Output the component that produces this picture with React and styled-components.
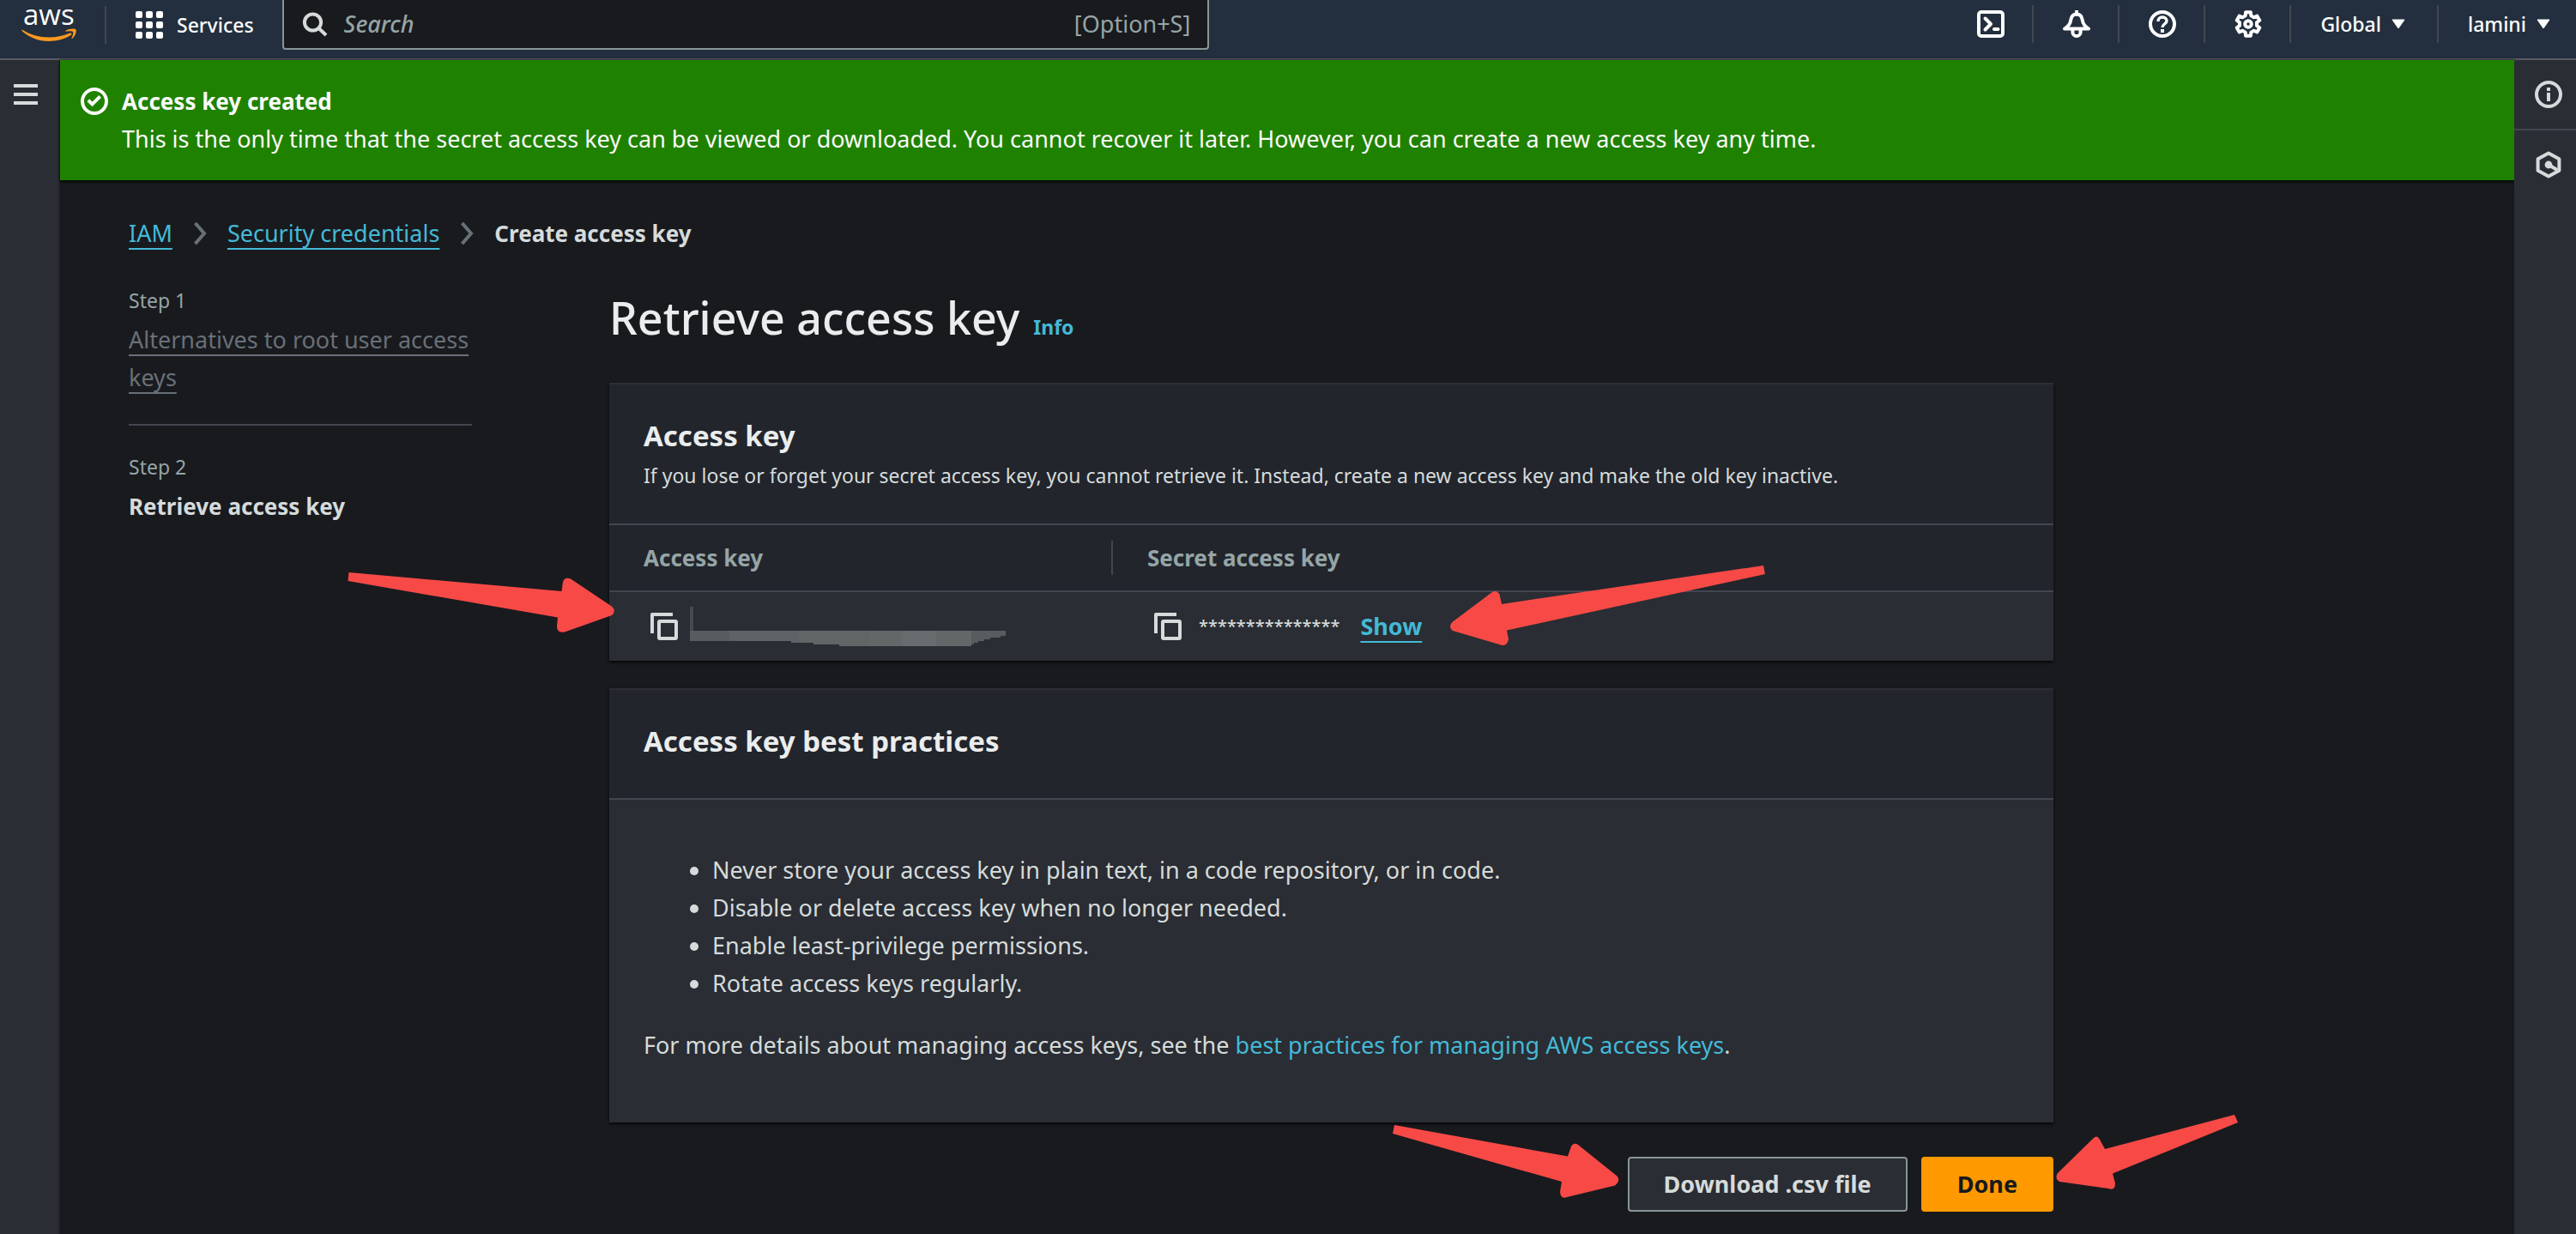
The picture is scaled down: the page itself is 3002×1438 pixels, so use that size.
import React from "react";
import styled, { createGlobalStyle, css } from "styled-components";

const color = {
  page: "#191a1e",
  rail: "#2a2d34",
  nav: "#232f3e",
  cardHeader: "#22252c",
  card: "#2a2d33",
  line: "#424650",
  navLine: "#414750",
  text: "#d5dbdb",
  heading: "#eaeded",
  muted: "#95a5a6",
  inactive: "#687078",
  border: "#879596",
  link: "#44b9d6",
  green: "#1f8100",
  orange: "#ff9900",
  red: "#f74a46",
};

const GlobalStyle = createGlobalStyle`
  *, *::before, *::after { box-sizing: border-box; }
  body {
    margin: 0;
    background: ${color.page};
    color: ${color.text};
    font-family: "Noto Sans", "Open Sans", sans-serif;
    font-size: 27px;
    font-weight: 400;
    line-height: 44px;
  }
  h1, h2, p, ul, ol { margin: 0; padding: 0; }
  button, input { font: inherit; color: inherit; }
`;

const bareButton = css`
  display: flex;
  align-items: center;
  border: 0;
  margin: 0;
  padding: 0;
  background: none;
  cursor: pointer;
`;

const underlined = css`
  text-decoration: underline;
  text-decoration-thickness: 2px;
  text-underline-offset: 7px;
  text-decoration-skip-ink: none;
`;

/* ---------- page frame ---------- */

const Page = styled.div`
  display: flex;
  flex-direction: column;
  min-height: 100vh;
  overflow: hidden;
`;

const TopNav = styled.header`
  display: flex;
  align-items: flex-start;
  justify-content: space-between;
  padding-bottom: 10px;
  background: ${color.nav};
  border-bottom: 2px solid #585b64;
`;

const NavGroup = styled.div`
  display: flex;
  flex: ${(p) => (p.$grow ? "1" : "none")};
  align-items: center;
  height: 58px;
  padding-bottom: ${(p) => (p.$grow ? "0" : "2px")};
`;

const Logo = styled.a`
  display: flex;
  margin-left: 22px;
  margin-right: 30px;
`;

const NavDivider = styled.span`
  width: 2px;
  height: 44px;
  background: ${color.navLine};
`;

const NavButton = styled.button`
  ${bareButton}
  gap: ${(p) => p.$gap || 16}px;
  height: 56px;
  padding: 0 ${(p) => p.$right}px 0 34px;
  color: #fff;
  font-size: 23px;
  font-weight: 500;
`;

const NavIconButton = styled.button`
  ${bareButton}
  height: 56px;
  padding: 0 32px 0 34px;
  color: #fff;
`;

const SearchBox = styled.label`
  display: flex;
  align-items: center;
  width: 36vw;
  height: 58px;
  padding: 0 20px 0 21px;
  background: ${color.page};
  border: 2px solid ${color.border};
  border-top: 0;
  border-radius: 0 0 4px 4px;
  color: ${color.muted};
`;

const SearchInput = styled.input`
  flex: 1;
  min-width: 0;
  margin-left: 17px;
  padding: 0;
  border: 0;
  outline: 0;
  background: none;
  &::placeholder {
    color: ${color.muted};
    font-style: italic;
    font-weight: 500;
    opacity: 1;
  }
`;

const Body = styled.div`
  display: flex;
  flex: 1;
`;

const LeftRail = styled.aside`
  width: 70px;
  padding: 28px 16px;
  background: ${color.rail};
`;

const RightRail = styled.aside`
  width: 72px;
  background: ${color.rail};
`;

const RailButton = styled.button`
  ${bareButton}
  color: ${color.text};
`;

const RailTab = styled(RailButton)`
  width: 100%;
  padding: 24px 16px 24px 24px;
  & + & { border-top: 2px solid ${color.line}; }
`;

const Content = styled.div`
  flex: 1;
  min-width: 0;
  box-shadow: 0 0 2px 1px rgba(0, 0, 0, 0.4);
`;

/* ---------- banner ---------- */

const Banner = styled.section`
  display: flex;
  align-items: flex-start;
  gap: 16px;
  padding: 26px 24px;
  background: ${color.green};
  color: #fafafa;
  box-shadow: 0 2px 3px rgba(0, 0, 0, 0.8);
`;

const BannerIcon = styled.span`
  display: flex;
  align-items: center;
  height: 44px;
`;

const Strong = styled.strong`
  display: block;
  font-size: 26px;
  font-weight: 700;
`;

/* ---------- breadcrumb and steps ---------- */

const Inner = styled.div`
  padding: 40px 80px 24px;
`;

const Breadcrumb = styled.nav`
  display: flex;
  align-items: center;
  gap: 24px;
  margin-bottom: 40px;
`;

const Link = styled.a`
  color: ${(p) => (p.$inactive ? color.inactive : color.link)};
  text-decoration: none;
  ${(p) => p.$underline && underlined}
`;

const Columns = styled.div`
  display: grid;
  grid-template-columns: 400px minmax(0, 1683px);
  column-gap: 160px;
`;

const Steps = styled.ol`
  list-style: none;
`;

const Step = styled.li`
  & + & {
    margin-top: 32px;
    padding-top: 32px;
    border-top: 2px solid ${color.line};
  }
`;

const StepLabel = styled.p`
  margin-bottom: 8px;
  color: ${color.muted};
  font-size: 23px;
  line-height: 32px;
`;

/* ---------- main column ---------- */

const Main = styled.main`
  position: relative;
`;

const TitleRow = styled.div`
  display: flex;
  align-items: baseline;
  gap: 16px;
  margin-bottom: 40px;
`;

const Title = styled.h1`
  color: ${color.heading};
  font-size: 52px;
  font-weight: 500;
  line-height: 72px;
`;

const InfoLink = styled.a`
  color: ${color.link};
  font-size: 23px;
  font-weight: 700;
  line-height: 32px;
  text-decoration: none;
`;

const Card = styled.section`
  margin-bottom: ${(p) => p.$gap}px;
  background: ${color.card};
  border-top: 2px solid #2c2e34;
  box-shadow: 0 2px 3px rgba(0, 0, 0, 0.8);
`;

const CardHeader = styled.div`
  padding: 38px 40px ${(p) => p.$bottom}px;
  background: ${color.cardHeader};
  border-bottom: 2px solid ${color.line};
`;

const CardTitle = styled.h2`
  color: ${color.heading};
  font-size: 33px;
  font-weight: 700;
  line-height: 44px;
`;

const CardText = styled.p`
  font-size: 23px;
  line-height: 48px;
`;

const Table = styled.table`
  width: 100%;
  table-layout: fixed;
  border-collapse: separate;
  border-spacing: 0;
  text-align: left;
`;

const HeadCell = styled.th`
  width: ${(p) => (p.$first ? "587px" : "auto")};
  height: 78px;
  padding: 0;
  background: ${color.cardHeader};
  border-bottom: 2px solid ${color.line};
  color: ${color.muted};
  font-size: 26px;
  font-weight: 700;
`;

const HeadLabel = styled.div`
  height: 40px;
  padding-left: 40px;
  border-right: ${(p) => (p.$rule ? `2px solid ${color.line}` : "0")};
  line-height: 40px;
`;

const Cell = styled.td`
  height: 80px;
  padding: 0 0 0 48px;
`;

const CellContent = styled.div`
  display: flex;
  align-items: center;
  gap: ${(p) => p.$gap}px;
`;

const CopyButton = styled.button`
  ${bareButton}
`;

const Mask = styled.span`
  font-size: 20px;
  font-weight: 500;
  line-height: 32px;
`;

const ShowButton = styled.button`
  ${bareButton}
  ${underlined}
  margin-left: 4px;
  color: ${color.link};
  font-size: 27px;
  font-weight: 700;
`;

const Practices = styled.div`
  padding: 60px 40px 68px;
`;

const PracticeList = styled.ul`
  margin-bottom: 28px;
  padding-left: 80px;
`;

const Actions = styled.div`
  display: flex;
  justify-content: flex-end;
  gap: 16px;
`;

const ActionButton = styled.button`
  height: 64px;
  padding: 0 40px;
  border: 2px solid ${(p) => (p.$primary ? color.orange : color.border)};
  border-radius: 4px;
  background: ${(p) => (p.$primary ? color.orange : color.card)};
  color: ${(p) => (p.$primary ? "#16191f" : color.text)};
  font-size: 27px;
  font-weight: 700;
  line-height: 40px;
  cursor: pointer;
`;

const Arrows = styled.svg`
  position: absolute;
  top: 0;
  left: 0;
  overflow: visible;
  pointer-events: none;
`;

/* ---------- drawings ---------- */

const Icon = ({ children, size = 32 }) => (
  <svg width={size} height={size} viewBox="0 0 32 32" fill="none" stroke="currentColor" strokeWidth="4" aria-hidden="true">
    {children}
  </svg>
);

const AwsLogo = () => (
  <svg width="70" height="56" viewBox="22 0 70 56" role="img" aria-label="AWS home">
    <text x="27" y="28" fill="#fff" fontSize="33" fontFamily="Open Sans">aws</text>
    <g fill="#ff9a1f">
      <path d="M25.6 33.6C35 39.5 46 42.6 57 42.6C65 42.6 74 41 81 37.8C83 37 84.5 38.7 82.8 39.8C75.5 45 65.5 47 57 47C44.5 47 33.5 42.3 25.8 35.2C25.2 34.4 25.2 33.4 25.6 33.6Z" />
      <path d="M85 36C83.9 34.6 79 35.4 76.8 35.7C76.2 35.7 76 35.2 76.6 34.8C80 32.2 87 31.8 88.4 33.2C89.6 34.6 88 40.8 84.4 43.8C83.8 44.2 83.2 44 83.5 43.3C84.4 41.2 86 37.4 85 36Z" />
    </g>
  </svg>
);

const GridIcon = () => (
  <svg width="32" height="32" viewBox="0 0 32 32" fill="#fff" aria-hidden="true">
    {[0, 12, 24].map((y) => [0, 12, 24].map((x) => <rect key={`${x}-${y}`} x={x} y={y} width="8" height="8" rx="2" />))}
  </svg>
);

const Caret = () => (
  <svg width="16" height="12" viewBox="0 0 16 12" fill="currentColor" stroke="currentColor" strokeLinejoin="round" aria-hidden="true">
    <path d="M1 1H15L8 11Z" />
  </svg>
);

const gearPoints = Array.from({ length: 6 }, (_, i) => i * 60 - 90)
  .flatMap((a) => [[a - 19, 10.2], [a - 12, 14], [a + 12, 14], [a + 19, 10.2]])
  .map(([a, r]) => {
    const t = (a * Math.PI) / 180;
    return `${(16 + r * Math.cos(t)).toFixed(2)},${(16 + r * Math.sin(t)).toFixed(2)}`;
  })
  .join(" ");

const CloudShellIcon = () => (
  <Icon>
    <rect x="2" y="2" width="28" height="28" rx="3" />
    <path d="M9.5 9.5L16 16L9.5 22.5M20 22H24.5" strokeLinecap="round" strokeLinejoin="round" />
  </Icon>
);

const BellIcon = () => (
  <Icon>
    <path d="M16 1V5M2 21.6C6 18.5 8.6 16.5 9.2 11.5C9.8 7 12.4 4.4 16 4.4C19.6 4.4 22.2 7 22.8 11.5C23.4 16.5 26 18.5 30 21.6Z" strokeLinecap="round" strokeLinejoin="round" />
    <path d="M11.4 23V25.4A4.6 4.6 0 0 0 20.6 25.4V23" />
  </Icon>
);

const HelpIcon = () => (
  <Icon>
    <circle cx="16" cy="16" r="14" />
    <path d="M11 13C11 9.8 13 8 16 8C19 8 21 9.8 21 12.4C21 15.6 16 16 16 20" strokeWidth="3.4" />
    <path d="M14 24H18" />
  </Icon>
);

const GearIcon = () => (
  <Icon>
    <polygon points={gearPoints} strokeLinejoin="round" />
    <circle cx="16" cy="16" r="3.8" />
  </Icon>
);

const CheckIcon = () => (
  <Icon>
    <circle cx="16" cy="16" r="14" />
    <path d="M8.8 14.8L13.5 19.4L22.6 10.4" />
  </Icon>
);

const InfoIcon = () => (
  <Icon>
    <circle cx="16" cy="16" r="14" />
    <path d="M16 8V12M16 14V24" />
  </Icon>
);

const HexIcon = () => (
  <Icon>
    <path d="M16 2.4L28.4 9.2V22.8L16 29.6L3.6 22.8V9.2Z" strokeLinejoin="round" />
    <circle cx="16" cy="16" r="4.4" fill="currentColor" stroke="none" />
    <path d="M16 16L26 22" />
  </Icon>
);

const CopyIcon = () => (
  <Icon>
    <path d="M2 24V2H26" strokeLinejoin="round" />
    <rect x="10" y="10" width="20" height="20" rx="1" />
  </Icon>
);

const SearchIcon = () => (
  <svg width="32" height="32" viewBox="0 0 32 32" fill="none" stroke={color.text} strokeWidth="4" aria-hidden="true">
    <circle cx="12.5" cy="14" r="9.6" />
    <path d="M19 20.5L28 29" />
  </svg>
);

const MenuIcon = () => (
  <svg width="28" height="24" viewBox="0 0 28 24" fill="currentColor" aria-hidden="true">
    <path d="M0 0H28V4H0ZM0 10H28V14H0ZM0 20H28V24H0Z" />
  </svg>
);

const Chevron = () => (
  <svg width="16" height="26" viewBox="0 0 16 26" fill="none" stroke={color.inactive} strokeWidth="4" aria-hidden="true">
    <path d="M2.5 1L13 13L2.5 25" />
  </svg>
);

const Redaction = () => (
  <svg width="368" height="46" viewBox="0 0 368 46" role="img" aria-label="Hidden access key">
    <path d="M0 0H4V28H0Z" fill="#474a4e" />
    <path d="M0 28H368V34H362V36H350V38H343V40H336V42H331V44H325V46H174V44H144V42H118V40H0Z" fill="#595c5e" />
    <path d="M46 28H126V42H118V40H46Z" fill="#606365" />
    <path d="M126 28H210V46H174V44H144V42H126Z" fill="#626566" />
    <path d="M247 28H287V46H247Z" fill="#696c6e" />
    <path d="M210 28H247V46H210ZM287 28H328V46H287Z" fill="#646768" />
  </svg>
);

const arrowShapes = [
  "M406.5 667L654.5 689L656 678Q658 672 665 674.5L712 706Q719 711.5 713 717L658 736.5Q649 738 649 730L650 719.5L405.5 677Z",
  "M2055 659L1750 704L1747.5 692.5Q1744 687 1739 690L1693 724.5Q1687 730 1693 735L1749 751.5Q1756 754 1758 745L1756 734.5L2057 669Z",
  "M1625 1311L1623 1321L1820 1377L1818 1389Q1819 1398 1826 1395L1882 1381.5Q1889 1376 1884.5 1370.5L1839 1334Q1834 1330.5 1831 1336L1827 1347.5Z",
  "M2604 1299L2608 1308L2462 1367.5L2465 1379Q2465 1388 2457 1385L2400 1377Q2394 1373 2398 1367L2440 1326Q2444 1322 2447 1328L2453 1339Z",
];

const practices = [
  "Never store your access key in plain text, in a code repository, or in code.",
  "Disable or delete access key when no longer needed.",
  "Enable least-privilege permissions.",
  "Rotate access keys regularly.",
];

const iconButtons = [
  ["CloudShell", CloudShellIcon],
  ["Notifications", BellIcon],
  ["Help", HelpIcon],
  ["Settings", GearIcon],
];

export default function App() {
  return (
    <Page>
      <GlobalStyle />
      <TopNav>
        <NavGroup $grow>
          <Logo href="#home"><AwsLogo /></Logo>
          <NavDivider />
          <NavButton type="button" $right={33}><GridIcon />Services</NavButton>
          <SearchBox>
            <SearchIcon />
            <SearchInput type="text" placeholder="Search" aria-label="Search" />
            <span>[Option+S]</span>
          </SearchBox>
        </NavGroup>
        <NavGroup>
          {iconButtons.map(([label, Glyph], i) => (
            <React.Fragment key={label}>
              {i > 0 && <NavDivider />}
              <NavIconButton type="button" aria-label={label}><Glyph /></NavIconButton>
            </React.Fragment>
          ))}
          <NavDivider />
          <NavButton type="button" $gap={12} $right={37}>Global<Caret /></NavButton>
          <NavDivider />
          <NavButton type="button" $gap={12} $right={30}>lamini<Caret /></NavButton>
        </NavGroup>
      </TopNav>
      <Body>
        <LeftRail>
          <RailButton type="button" aria-label="Open navigation"><MenuIcon /></RailButton>
        </LeftRail>
        <Content>
          <Banner>
            <BannerIcon><CheckIcon /></BannerIcon>
            <div>
              <Strong>Access key created</Strong>
              <p>This is the only time that the secret access key can be viewed or downloaded. You cannot recover it later. However, you can create a new access key any time.</p>
            </div>
          </Banner>
          <Inner>
            <Breadcrumb aria-label="Breadcrumb">
              <Link href="#iam" $underline>IAM</Link>
              <Chevron />
              <Link href="#credentials" $underline>Security credentials</Link>
              <Chevron />
              <Strong>Create access key</Strong>
            </Breadcrumb>
            <Columns>
              <Steps>
                <Step>
                  <StepLabel>Step 1</StepLabel>
                  <Link href="#step-1" $underline $inactive>Alternatives to root user access keys</Link>
                </Step>
                <Step>
                  <StepLabel>Step 2</StepLabel>
                  <Strong>Retrieve access key</Strong>
                </Step>
              </Steps>
              <Main>
                <TitleRow>
                  <Title>Retrieve access key</Title>
                  <InfoLink href="#info">Info</InfoLink>
                </TitleRow>
                <Card $gap={32}>
                  <CardHeader $bottom={32}>
                    <CardTitle>Access key</CardTitle>
                    <CardText>If you lose or forget your secret access key, you cannot retrieve it. Instead, create a new access key and make the old key inactive.</CardText>
                  </CardHeader>
                  <Table>
                    <thead>
                      <tr>
                        <HeadCell scope="col" $first><HeadLabel $rule>Access key</HeadLabel></HeadCell>
                        <HeadCell scope="col"><HeadLabel>Secret access key</HeadLabel></HeadCell>
                      </tr>
                    </thead>
                    <tbody>
                      <tr>
                        <Cell>
                          <CellContent $gap={14}>
                            <CopyButton type="button" aria-label="Copy access key"><CopyIcon /></CopyButton>
                            <Redaction />
                          </CellContent>
                        </Cell>
                        <Cell>
                          <CellContent $gap={20}>
                            <CopyButton type="button" aria-label="Copy secret access key"><CopyIcon /></CopyButton>
                            <Mask>***************</Mask>
                            <ShowButton type="button">Show</ShowButton>
                          </CellContent>
                        </Cell>
                      </tr>
                    </tbody>
                  </Table>
                </Card>
                <Card $gap={40}>
                  <CardHeader $bottom={44}>
                    <CardTitle>Access key best practices</CardTitle>
                  </CardHeader>
                  <Practices>
                    <PracticeList>
                      {practices.map((text) => <li key={text}>{text}</li>)}
                    </PracticeList>
                    <p>
                      For more details about managing access keys, see the{" "}
                      <Link href="#best-practices">best practices for managing AWS access keys</Link>.
                    </p>
                  </Practices>
                </Card>
                <Actions>
                  <ActionButton type="button">Download .csv file</ActionButton>
                  <ActionButton type="button" $primary>Done</ActionButton>
                </Actions>
                <Arrows width="1" height="1" viewBox="710 334 1 1" fill={color.red} aria-hidden="true">
                  {arrowShapes.map((d) => <path key={d} d={d} />)}
                </Arrows>
              </Main>
            </Columns>
          </Inner>
        </Content>
        <RightRail>
          <RailTab type="button" aria-label="Info panel"><InfoIcon /></RailTab>
          <RailTab type="button" aria-label="Diagnostics panel"><HexIcon /></RailTab>
        </RightRail>
      </Body>
    </Page>
  );
}
